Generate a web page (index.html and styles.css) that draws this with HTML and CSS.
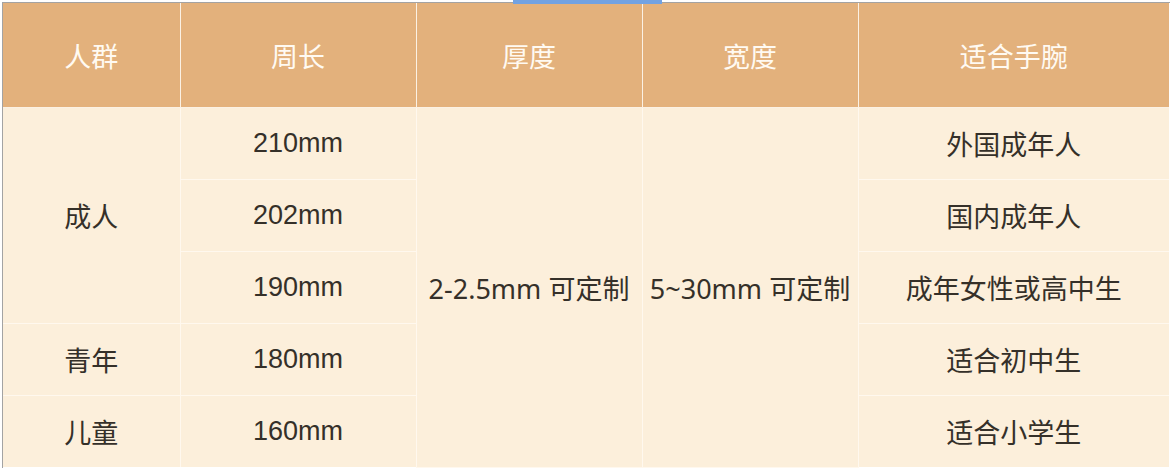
FILE: index.html
```html
<!DOCTYPE html>
<html lang="zh">
<head>
<meta charset="utf-8">
<link rel="stylesheet" href="styles.css">
</head>
<body>
<div class="tab-indicator"></div>
<div class="frame">
  <table class="size-table">
    <colgroup>
      <col class="c1"><col class="c2"><col class="c3"><col class="c4"><col class="c5">
    </colgroup>
    <thead>
      <tr><th>人群</th><th>周长</th><th>厚度</th><th>宽度</th><th>适合手腕</th></tr>
    </thead>
    <tbody>
      <tr>
        <td rowspan="3">成人</td>
        <td class="num">210mm</td>
        <td rowspan="5" class="spec">2-2.5mm 可定制</td>
        <td rowspan="5" class="spec">5~30mm 可定制</td>
        <td>外国成年人</td>
      </tr>
      <tr><td class="num">202mm</td><td>国内成年人</td></tr>
      <tr><td class="num">190mm</td><td>成年女性或高中生</td></tr>
      <tr><td>青年</td><td class="num">180mm</td><td>适合初中生</td></tr>
      <tr><td>儿童</td><td class="num">160mm</td><td>适合小学生</td></tr>
    </tbody>
  </table>
</div>
</body>
</html>
```

FILE: styles.css
```css
html, body {
  margin: 0;
  padding: 0;
  background: #ffffff;
}
body {
  font-family: "Noto Sans CJK SC", "Noto Sans", sans-serif;
}
.tab-indicator {
  position: absolute;
  top: 0;
  left: 513px;
  width: 149px;
  height: 4px;
  background: #72a2e2;
}
.frame {
  margin: 2px 0 0 2px;
  border-top: 1px solid #a3a3a3;
  border-left: 1px solid #a3a3a3;
  width: 1167px;
}
.size-table {
  border-collapse: collapse;
  table-layout: fixed;
  width: 1166px;
  font-size: 27px;
}
.c1 { width: 177px; }
.c2 { width: 236px; }
.c3 { width: 226px; }
.c4 { width: 216px; }
.c5 { width: 311px; }
.size-table th {
  height: 104px;
  padding: 0;
  background: #e3b17c;
  color: #fffaf2;
  font-weight: normal;
  border: 1px solid #fbf1e4;
  border-top: none;
}
.size-table td {
  height: 71px;
  padding: 0;
  background: #fcefdb;
  color: #353029;
  text-align: center;
  border: 1px solid #fff8ee;
  white-space: nowrap;
}
.size-table tr > :first-child { border-left: none; }
.size-table tr > :last-child { border-right: none; }
.size-table tbody tr:last-child td { border-bottom: none; }
.size-table td.num {
  font-family: "Liberation Sans", "Noto Sans CJK SC", sans-serif;
}
.size-table td.spec {
  font-family: "Noto Sans", "Noto Sans CJK SC", sans-serif;
  letter-spacing: 0;
}
```
